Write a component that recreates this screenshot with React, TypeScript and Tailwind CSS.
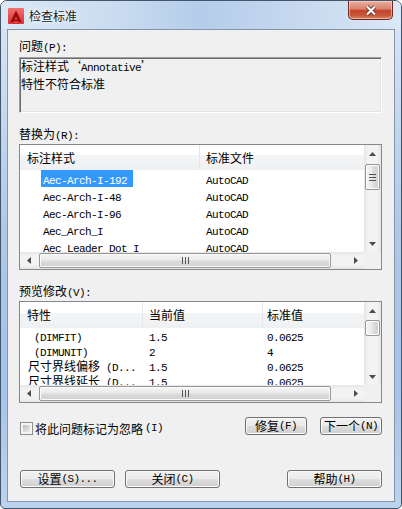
import React from "react";

const ASCII = /^[\x20-\x7e]+$/;

// ASCII runs in a narrow mono face, CJK left to Noto
function T({ s }: { s: string }) {
  return (
    <>
      {s
        .split(/([\x20-\x7e]+)/)
        .filter(Boolean)
        .map((p, i) =>
          ASCII.test(p) ? (
            <span
              key={i}
              className="whitespace-pre font-['Liberation_Mono',monospace] text-[11px] tracking-[-0.6px]"
            >
              {p}
            </span>
          ) : (
            <span key={i}>{p}</span>
          )
        )}
    </>
  );
}

function Arrow({ dir }: { dir: "up" | "down" | "left" | "right" }) {
  if (dir === "up")
    return (
      <svg width="7" height="4" viewBox="0 0 7 4">
        <polygon points="0,4 3.5,0 7,4" fill="#4d4d4d" />
      </svg>
    );
  if (dir === "down")
    return (
      <svg width="7" height="4" viewBox="0 0 7 4">
        <polygon points="0,0 3.5,4 7,0" fill="#4d4d4d" />
      </svg>
    );
  if (dir === "left")
    return (
      <svg width="4" height="7" viewBox="0 0 4 7">
        <polygon points="4,0 0,3.5 4,7" fill="#4d4d4d" />
      </svg>
    );
  return (
    <svg width="4" height="7" viewBox="0 0 4 7">
      <polygon points="0,0 4,3.5 0,7" fill="#4d4d4d" />
    </svg>
  );
}

function VScroll({ thumb, grip }: { thumb: string; grip?: boolean }) {
  return (
    <div className="flex w-[17px] flex-col bg-[linear-gradient(90deg,#e6e6e6,#f3f3f3_25%,#f3f3f3_75%,#e6e6e6)]">
      <div className="flex h-[17px] items-center justify-center">
        <Arrow dir="up" />
      </div>
      <div className="flex flex-1 flex-col px-px">
        <div
          className={`flex items-center justify-center rounded-[2px] border border-[#979797] bg-[linear-gradient(90deg,#f6f6f6,#eaeaea_45%,#dcdcdc_55%,#cfcfcf)] shadow-[inset_0_0_0_1px_#fbfbfb] ${thumb}`}
        >
          {grip && (
            <svg width="7" height="7" viewBox="0 0 7 7">
              <rect x="0" y="0" width="7" height="1" fill="#555" />
              <rect x="0" y="3" width="7" height="1" fill="#555" />
              <rect x="0" y="6" width="7" height="1" fill="#555" />
            </svg>
          )}
        </div>
      </div>
      <div className="flex h-[17px] items-center justify-center">
        <Arrow dir="down" />
      </div>
    </div>
  );
}

function HScroll() {
  return (
    <div className="flex h-[17px] flex-1 bg-[linear-gradient(180deg,#e6e6e6,#f3f3f3_25%,#f3f3f3_75%,#e6e6e6)]">
      <div className="flex w-[17px] items-center justify-center">
        <Arrow dir="left" />
      </div>
      <div className="flex flex-1 py-px pl-[2px]">
        <div className="flex w-[292px] items-center justify-center rounded-[2px] border border-[#979797] bg-[linear-gradient(180deg,#f6f6f6,#eaeaea_45%,#dcdcdc_55%,#cfcfcf)] shadow-[inset_0_0_0_1px_#fbfbfb]">
          <svg width="7" height="7" viewBox="0 0 7 7">
            <rect x="0" y="0" width="1" height="7" fill="#555" />
            <rect x="3" y="0" width="1" height="7" fill="#555" />
            <rect x="6" y="0" width="1" height="7" fill="#555" />
          </svg>
        </div>
      </div>
      <div className="flex w-[17px] items-center justify-center">
        <Arrow dir="right" />
      </div>
    </div>
  );
}

const headerBg =
  "bg-[linear-gradient(180deg,#ffffff_0%,#ffffff_42%,#f4f5f7_42%,#eff0f2_100%)]";

function WinButton({ label, className }: { label: string; className: string }) {
  return (
    <button
      className={`flex h-[18px] items-center justify-center rounded-[3px] border border-[#707070] bg-[linear-gradient(180deg,#f2f2f2,#ebebeb_48%,#dddddd_52%,#cfcfcf)] leading-none shadow-[inset_0_0_0_1px_#fbfbfb] ${className}`}
    >
      <T s={label} />
    </button>
  );
}

const styles = [
  "Aec-Arch-I-192",
  "Aec-Arch-I-48",
  "Aec-Arch-I-96",
  "Aec_Arch_I",
  "Aec Leader Dot I",
];

const props = [
  [" (DIMFIT)", "1.5", "0.0625"],
  [" (DIMUNIT)", "2", "4"],
  ["尺寸界线偏移 (D...", "1.5", "0.0625"],
  ["尺寸界线延长 (D...", "1.5", "0.0625"],
];

function TitleBar() {
  return (
    <div className="flex h-[28px] justify-between rounded-t-[6px] bg-[linear-gradient(90deg,#dce8f5,#c8dbef_30%,#b5cdea_50%,#c6d9ef_75%,#dbe8f6)] pl-[7px] pr-[8px]">
      <div className="flex items-start gap-[5px] pt-[7px]">
        <svg width="16" height="16" viewBox="0 0 16 16">
          <defs>
            <linearGradient id="acad" x1="0" y1="0" x2="0" y2="1">
              <stop offset="0" stopColor="#f07070" />
              <stop offset="1" stopColor="#d83232" />
            </linearGradient>
          </defs>
          <rect x="0" y="0" width="16" height="16" rx="1" fill="url(#acad)" />
          <path d="M2.5 14 L8 2.5 L13.5 14 H10.6 L8 8.2 L5.4 14 Z" fill="#9a0a0a" />
          <path d="M6.3 11.6 H9.7 L10.3 13 H5.7 Z" fill="#9a0a0a" />
        </svg>
        <span className="leading-[16px] text-[#1a1a1a] [text-shadow:0_0_6px_#fff,0_0_3px_#fff]">
          检查标准
        </span>
      </div>
      <button className="flex h-[19px] w-[45px] items-center justify-center rounded-b-[5px] border border-t-0 border-[#6b2a22] bg-[linear-gradient(180deg,#eab0a2,#d9806d_45%,#c4452e_52%,#c85638_80%,#dd8a66)] shadow-[inset_0_0_0_1px_rgba(255,220,210,0.55)]">
        <svg width="12" height="11" viewBox="0 0 12 11">
          <path d="M2 1.5 L10 9.5 M10 1.5 L2 9.5" stroke="#5a2620" strokeWidth="3.8" />
          <path d="M2 1.5 L10 9.5 M10 1.5 L2 9.5" stroke="#ffffff" strokeWidth="2.2" />
        </svg>
      </button>
    </div>
  );
}

export default function App() {
  return (
    <div className="h-[509px] w-[402px] select-none font-['Noto_Sans_CJK_SC',sans-serif] text-[12px] text-black">
      <div className="flex h-full w-full flex-col rounded-t-[7px] rounded-b-[5px] border border-[#44566c] bg-[linear-gradient(180deg,#dce8f5_0%,#cfdff1_12%,#aec9e8_45%,#a5c3e6_75%,#bcd3ee_100%)]">
        <TitleBar />

        <div className="mx-[6px] flex h-[473px] flex-col border border-[#8295ad] bg-[#f0f0f0] pl-[11px] pr-[12px]">
          <div className="mt-[8px] h-[16px] leading-[16px]">
            <T s="问题(P):" />
          </div>
          <div className="mt-[3px] h-[56px] border border-t-[#a0a0a0] border-l-[#a0a0a0] border-r-white border-b-white pl-px leading-[16px] shadow-[inset_1px_1px_0_#696969,inset_-1px_-1px_0_#e3e3e3]">
            <div>
              <T s="标注样式‘Annotative’" />
            </div>
            <div>特性不符合标准</div>
          </div>

          <div className="mt-[13px] h-[16px] leading-[16px]">
            <T s="替换为(R):" />
          </div>
          <div className="mt-[2px] flex h-[126px] flex-col border border-[#828790] bg-white">
            <div className="flex min-h-0 flex-1">
              <div className="flex-1 overflow-hidden">
                <div className={`flex h-[25px] ${headerBg}`}>
                  <div className="w-[180px] border-r border-[#e3e6ea] pl-[7px] leading-[25px]">
                    标注样式
                  </div>
                  <div className="pl-[6px] leading-[25px]">标准文件</div>
                </div>
                {styles.map((s, i) => (
                  <div key={s} className="flex h-[17px] leading-[17px]">
                    <div className="w-[180px] whitespace-nowrap pl-[21px]">
                      <span
                        className={
                          i === 0
                            ? "inline-block h-[17px] bg-[#3399ff] pl-[2px] pr-[6px] text-white"
                            : "inline-block h-[17px] pl-[2px] pr-[6px]"
                        }
                      >
                        <T s={s} />
                      </span>
                    </div>
                    <div className="pl-[6px]">
                      <T s="AutoCAD" />
                    </div>
                  </div>
                ))}
              </div>
              <VScroll thumb="mt-[2px] h-[26px]" grip />
            </div>
            <div className="flex">
              <HScroll />
              <div className="w-[17px] bg-[#f0f0f0]" />
            </div>
          </div>

          <div className="mt-[13px] h-[16px] leading-[16px]">
            <T s="预览修改(V):" />
          </div>
          <div className="mt-[2px] flex h-[102px] flex-col border border-[#828790] bg-white">
            <div className="flex min-h-0 flex-1">
              <div className="flex-1 overflow-hidden">
                <div className={`flex h-[26px] ${headerBg}`}>
                  <div className="w-[123px] border-r border-[#e3e6ea] pl-[7px] leading-[26px]">
                    特性
                  </div>
                  <div className="w-[120px] border-r border-[#e3e6ea] pl-[6px] leading-[26px]">
                    当前值
                  </div>
                  <div className="pl-[4px] leading-[26px]">标准值</div>
                </div>
                {props.map(([a, b, c]) => (
                  <div key={a} className="flex h-[15px] leading-[15px]">
                    <div className="w-[123px] overflow-hidden whitespace-nowrap pl-[8px]">
                      <T s={a} />
                    </div>
                    <div className="w-[120px] pl-[6px]">
                      <T s={b} />
                    </div>
                    <div className="pl-[4px]">
                      <T s={c} />
                    </div>
                  </div>
                ))}
              </div>
              <VScroll thumb="mt-[1px] h-[16px]" />
            </div>
            <div className="flex">
              <HScroll />
              <div className="w-[17px] bg-[#f0f0f0]" />
            </div>
          </div>

          <div className="mt-[14px] flex h-[18px] items-end justify-between">
            <label className="flex items-center gap-[2px] pl-px leading-[13px]">
              <span className="flex h-[13px] w-[13px] border border-[#8e8f8f] bg-[#f4f4f4] p-[2px]">
                <span className="flex-1 bg-[linear-gradient(135deg,#b9bdc3,#eeeeee)]" />
              </span>
              <T s="将此问题标记为忽略(I)" />
            </label>
            <div className="flex gap-[13px]">
              <WinButton label="修复(F)" className="w-[62px]" />
              <WinButton label="下一个(N)" className="w-[62px]" />
            </div>
          </div>

          <div className="mt-[35px] flex justify-between">
            <div className="flex gap-[10px] pl-px">
              <WinButton label="设置(S)..." className="w-[95px]" />
              <WinButton label="关闭(C)" className="w-[95px]" />
            </div>
            <WinButton label="帮助(H)" className="w-[95px]" />
          </div>
        </div>
      </div>
    </div>
  );
}
